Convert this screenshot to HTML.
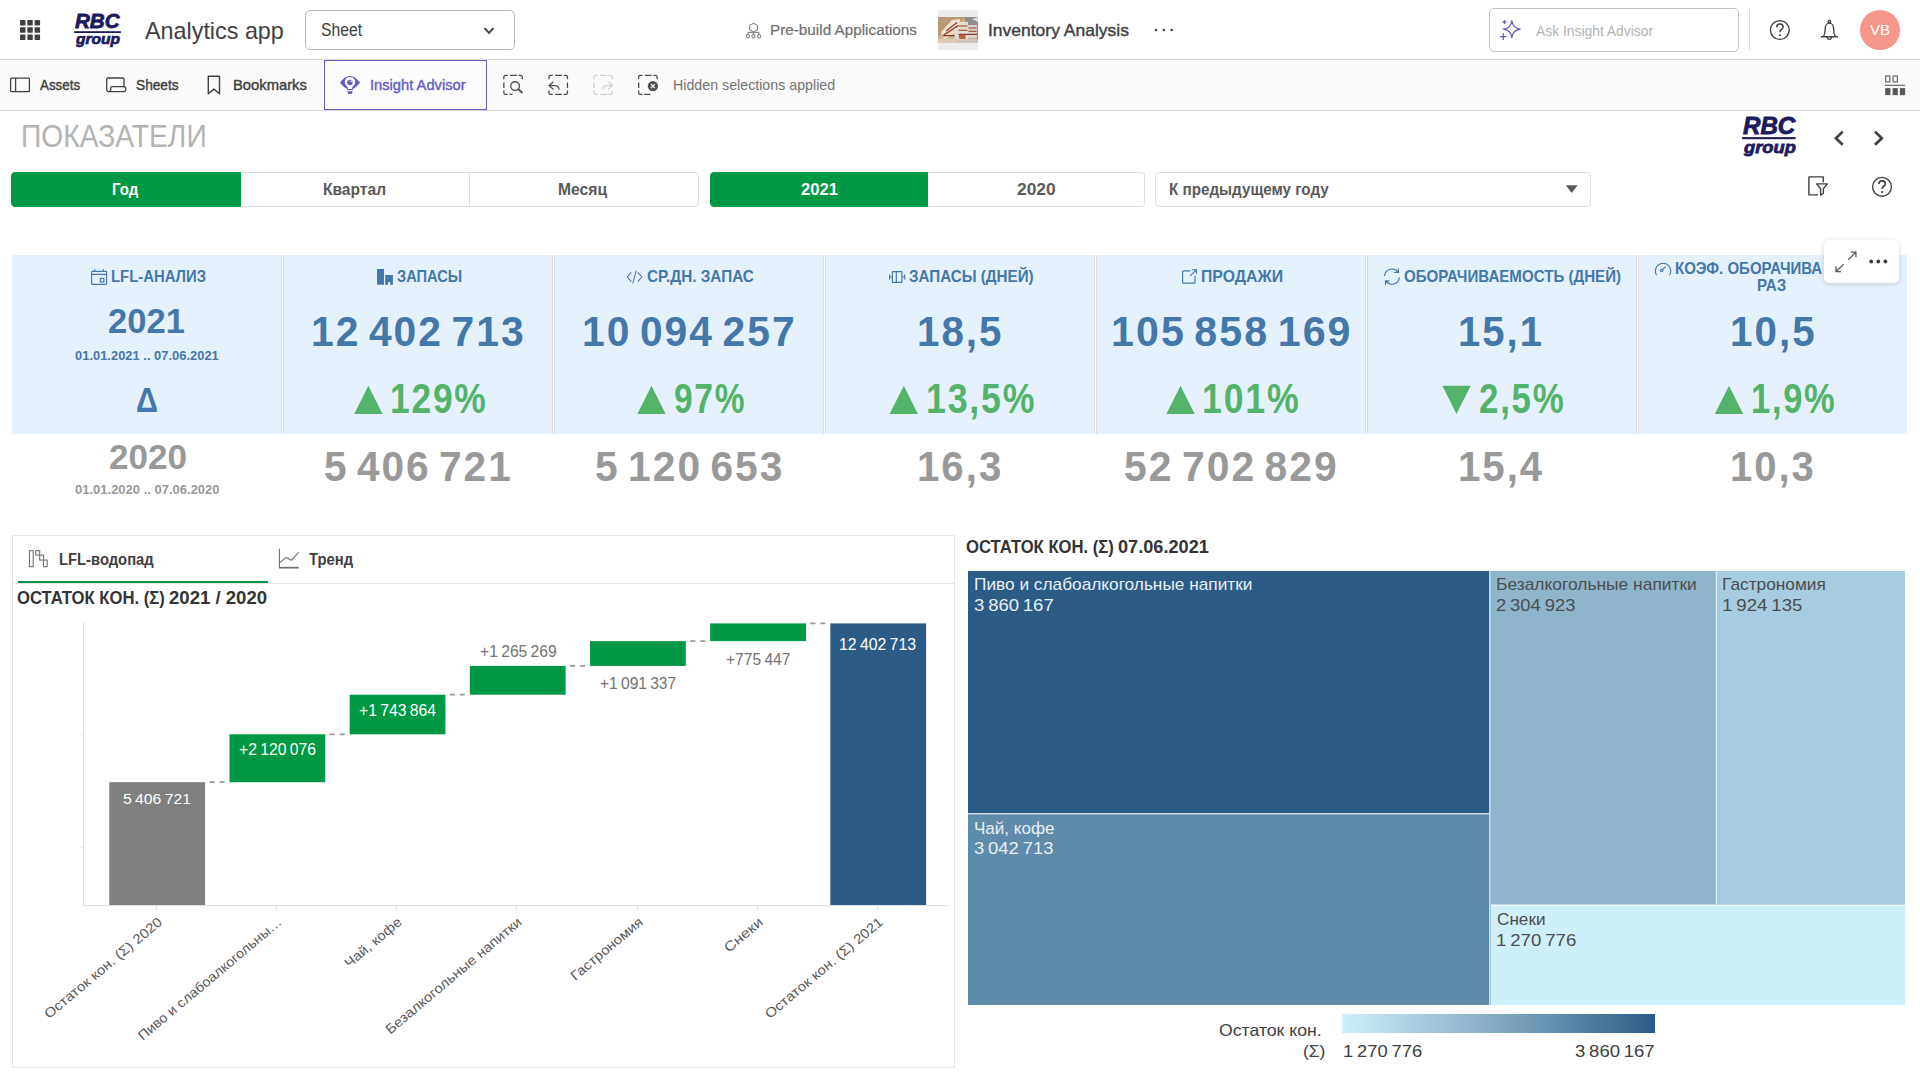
<!DOCTYPE html>
<html lang="ru">
<head>
<meta charset="utf-8">
<title>Inventory Analysis - Analytics app</title>
<style>
*{box-sizing:border-box;margin:0;padding:0}
html,body{width:1920px;height:1080px;overflow:hidden;background:#fff}
body{font-family:"Liberation Sans",sans-serif;color:#404040;position:relative}
.a{position:absolute}
.t{position:absolute;white-space:pre;line-height:1;transform-origin:0 0;display:block}
svg{position:absolute;left:0;top:0;overflow:visible}
svg text{font-family:"Liberation Sans",sans-serif}
#topbar{left:0;top:0;width:1920px;height:60px;background:#fff;border-bottom:1px solid #d9d9d9;box-shadow:inset 0 -1px 0 #f7f7f7}
#toolbar{left:0;top:60px;width:1920px;height:51px;background:#fafafa;border-bottom:1px solid #d6d6d6}
.btn{position:absolute;top:172px;height:35px;background:#fff;border:1px solid #dedede}
.btn.on{background:#009845;border-color:#009845}
.kc{position:absolute;top:255px;height:179px;width:269px;background:#e5f2fd}
.ks{position:absolute;top:255px;height:179px;width:1px;background:#dcdcdc}
.tm{position:absolute}
</style>
</head>
<body>
<!-- ================= TOP BAR ================= -->
<div id="topbar" class="a"></div>
<div id="toolbar" class="a"></div>
<div class="a" id="sheetsel" style="left:305px;top:10px;width:210px;height:40px;border:1px solid #b9b9b9;border-radius:5px;background:#fff"></div>
<div class="a" id="thumbbox" style="left:938px;top:10px;width:40px;height:40px;background:#ececec"></div>
<svg id="thumb" width="40" height="26" viewBox="0 0 40 26" style="left:938px;top:17px">
<rect width="40" height="26" fill="#c9ad8c"/>
<polygon points="0,0 27,0 20,7 0,19" fill="#b79b78"/>
<polygon points="26,0 40,0 40,22 30,18 28,6" fill="#8f8e8d"/>
<polygon points="34,2 40,0 40,5" fill="#d9dde2"/>
<polygon points="3,15 14,3 22,2 22,6 5,20" fill="#efe2d2"/>
<polygon points="5,20 20,10 20,14 6,23" fill="#ead9c6"/>
<rect x="20" y="5" width="10" height="18" fill="#e9ddd0"/>
<rect x="30" y="8" width="9" height="13" fill="#dcd3cb"/>
<g stroke="#8b3a26" stroke-width="1.1"><path d="M5 18.500L20 8.500M8 14L19 5.500M20.500 9h9M20.500 13.200h9M5 18.600h15M20.500 17.400h18.500M30.500 11h8M30.500 14.300h8"/></g>
<rect x="21" y="17.800" width="6.500" height="5.200" fill="#b5633c"/>
<rect x="16.500" y="11" width="3.500" height="12" fill="#d9dbe0"/>
<polygon points="0,21.500 16,21.500 40,22.500 40,26 0,26" fill="#dcc9b6"/>
<polygon points="20,23 40,22.300 40,26 18,26" fill="#c9c4bf"/>
</svg>
<div class="a" id="askbox" style="left:1489px;top:8px;width:250px;height:44px;border:1px solid #c4c4c4;border-radius:5px;background:#fff"></div>
<div class="a" style="left:1749px;top:10px;width:1px;height:40px;background:#d9d9d9"></div>
<div class="a" id="avatar" style="left:1860px;top:10px;width:40px;height:40px;border-radius:50%;background:#f4978a"></div>
<div class="a" id="iabtn" style="left:324px;top:60px;width:163px;height:50px;border:1px solid #655dc6;background:#fcfcfc"></div>

<!-- ================= BUTTON ROW ================= -->
<div class="btn on" style="left:11px;width:230px;border-radius:4px 0 0 4px"></div>
<div class="btn" style="left:241px;width:229px;border-left:none"></div>
<div class="btn" style="left:469px;width:230px;border-radius:0 4px 4px 0"></div>
<div class="btn on" style="left:710px;width:218px;border-radius:4px 0 0 4px"></div>
<div class="btn" style="left:928px;width:217px;border-left:none;border-radius:0 4px 4px 0"></div>
<div class="btn" style="left:1155px;width:436px;border-radius:4px"></div>

<!-- ================= KPI ================= -->
<div class="kc" style="left:12px;width:269px"></div>
<div class="ks" style="left:281px"></div><div class="ks" style="left:283px"></div>
<div class="kc" style="left:284px;width:268px"></div>
<div class="ks" style="left:552px"></div><div class="ks" style="left:554px"></div>
<div class="kc" style="left:555px;width:268px"></div>
<div class="ks" style="left:823px"></div><div class="ks" style="left:825px"></div>
<div class="kc" style="left:826px;width:268px"></div>
<div class="ks" style="left:1094px"></div><div class="ks" style="left:1096px"></div>
<div class="kc" style="left:1097px;width:268px"></div>
<div class="ks" style="left:1365px"></div><div class="ks" style="left:1367px"></div>
<div class="kc" style="left:1368px;width:268px"></div>
<div class="ks" style="left:1636px"></div><div class="ks" style="left:1638px"></div>
<div class="kc" style="left:1639px;width:268px"></div>

<!-- ================= LEFT PANEL ================= -->
<div class="a" id="lpanel" style="left:12px;top:535px;width:943px;height:533px;border:1px solid #e6e6e6"></div>
<div class="a" style="left:13px;top:583px;width:941px;height:1px;background:#e6e6e6"></div>
<div class="a" style="left:18px;top:581px;width:250px;height:2px;background:#009845"></div>

<!-- ================= TREEMAP ================= -->
<div class="tm" style="left:968px;top:571px;width:521px;height:242px;background:#2b5c88"></div>
<div class="tm" style="left:968px;top:813px;width:521px;height:1px;background:#cfdde7"></div>
<div class="tm" style="left:968px;top:814px;width:521px;height:1px;background:#93b1c8"></div>
<div class="tm" style="left:968px;top:815px;width:521px;height:190px;background:#5f8bab"></div>
<div class="tm" style="left:1489px;top:571px;width:1px;height:434px;background:#c6d9e5"></div>
<div class="tm" style="left:1490px;top:571px;width:1px;height:434px;background:#a9c8d9"></div>
<div class="tm" style="left:1491px;top:571px;width:224px;height:333px;background:#8fb5cb"></div>
<div class="tm" style="left:1715px;top:571px;width:1px;height:333px;background:#a5c4d6"></div>
<div class="tm" style="left:1716px;top:571px;width:1px;height:333px;background:#e3edf3"></div>
<div class="tm" style="left:1717px;top:571px;width:188px;height:333px;background:#a8ccdf"></div>
<div class="tm" style="left:1491px;top:904px;width:414px;height:1px;background:#c6dae6"></div>
<div class="tm" style="left:1491px;top:905px;width:414px;height:1px;background:#eef9fc"></div>
<div class="tm" style="left:1491px;top:906px;width:414px;height:99px;background:#cfeff9"></div>
<div class="a" id="legend" style="left:1342px;top:1014px;width:313px;height:19px;background:linear-gradient(90deg,#cfeff9 0%,#a8ccdf 25%,#8fb5cb 42%,#5f8bab 70%,#2b5c88 100%)"></div>

<!-- ================= ICONS / CHART (page coordinates) ================= -->
<svg width="1920" height="1080" viewBox="0 0 1920 1080" fill="none">
<!-- app grid -->
<g fill="#404040">
<rect x="20" y="20" width="5.5" height="5.5" rx=".8"/><rect x="27.3" y="20" width="5.5" height="5.5" rx=".8"/><rect x="34.6" y="20" width="5.5" height="5.5" rx=".8"/>
<rect x="20" y="27.3" width="5.5" height="5.5" rx=".8"/><rect x="27.3" y="27.3" width="5.5" height="5.5" rx=".8"/><rect x="34.6" y="27.3" width="5.5" height="5.5" rx=".8"/>
<rect x="20" y="34.6" width="5.5" height="5.5" rx=".8"/><rect x="27.3" y="34.6" width="5.5" height="5.5" rx=".8"/><rect x="34.6" y="34.6" width="5.5" height="5.5" rx=".8"/>
</g>
<!-- logos -->
<rect x="74.1" y="31.2" width="46.8" height="1.8" fill="#1d1b5e"/>
<rect x="1742.1" y="137.1" width="53.6" height="2.1" fill="#1d1b5e"/>
<!-- sheet chevron -->
<polyline points="484.4,28.2 489,32.8 493.6,28.2" stroke="#404040" stroke-width="1.9"/>
<!-- pre-build icon -->
<g stroke="#858585" stroke-width="1.050" stroke-linejoin="round">
<path d="M753.500 23.200l3.900 2.200v4.300l-3.900 2.200-3.900-2.200v-4.300z"/>
<path d="M753.500 31.900v2.700M747.900 34.600v-1.200a1 1 0 0 1 1-1h9.200a1 1 0 0 1 1 1v1.200"/>
<circle cx="747.900" cy="36.300" r="1.650"/><circle cx="753.500" cy="36.300" r="1.650"/><circle cx="759.100" cy="36.300" r="1.650"/>
</g>
<!-- more dots -->
<g fill="#404040"><circle cx="1156" cy="30" r="1.25"/><circle cx="1163.8" cy="30" r="1.25"/><circle cx="1171.7" cy="30" r="1.25"/></g>
<!-- sparkle -->
<g stroke="#655dc6" stroke-width="1.3" stroke-linejoin="round">
<path d="M1511.85 20.65C1512.75 26.15 1514.85 28.25 1520.35 29.15C1514.85 30.05 1512.75 32.15 1511.85 37.65C1510.95 32.15 1508.85 30.05 1503.35 29.15C1508.85 28.25 1510.95 26.15 1511.85 20.65z"/>
<path d="M1503.300 33.300v6.600M1500 36.600h6.600M1504.500 20.100v3.800M1502.600 22h3.800"/>
</g>
<!-- help / bell -->
<circle cx="1779.8" cy="30" r="9.4" stroke="#404040" stroke-width="1.4"/>
<path d="M1776.700 27.200c0-2 1.400-3.200 3.200-3.200s3.200 1.200 3.200 2.900c0 2.600-3.200 2.500-3.200 5.300" stroke="#404040" stroke-width="1.5"/><circle cx="1779.900" cy="35.300" r="1.050" fill="#404040"/>
<g stroke="#404040" stroke-width="1.350" stroke-linecap="round" stroke-linejoin="round">
<circle cx="1829.400" cy="21.700" r="1.250"/>
<path d="M1821.400 36.700h16M1823.500 36.700c1.200-2.200 1.700-4.300 1.700-8.200a4.200 5.400 0 0 1 8.400 0c0 3.900.5 6 1.700 8.200M1827.300 37.800a2.200 2.200 0 0 0 4.200 0"/>
</g>
<!-- toolbar: assets / sheets / bookmarks -->
<g stroke="#404040" stroke-width="1.3" stroke-linejoin="round">
<rect x="10.600" y="78.100" width="18.800" height="13.600" rx="1"/><path d="M15.600 78.100v13.600"/>
<path d="M124 86.700V79.300a1.300 1.300 0 0 0-1.300-1.300H108a1.300 1.300 0 0 0-1.300 1.300v10a2.400 2.400 0 0 0 2.400 2.400h14.300a2.500 2.500 0 0 0 0-5h-11.400a1.200 1.200 0 0 0-1.200 1.200v1.400a2.400 2.400 0 0 1-2.400 2.400"/>
<path d="M208.300 76.200h11.200v17.600l-5.600-4.700-5.600 4.700z" stroke-width="1.4"/>
</g>
<!-- insight advisor icon -->
<path d="M339.900 82.500c3.500-4.600 6.600-6.600 10.100-6.600s6.600 2 10.100 6.600c-3 3.800-5 5.300-7 6.300l-.2 1.200h-5.800l-.2-1.200c-2-1-4-2.500-7-6.300z" fill="#655dc6"/>
<path d="M350 76.900a5.150 5.150 0 0 1 3.200 9.200c-.8.700-1 1.300-1 2.800h-4.400c0-1.500-.2-2.100-1-2.800a5.150 5.150 0 0 1 3.200-9.200z" fill="#fcfcfc"/>
<circle cx="349.900" cy="82.500" r="2.700" fill="#655dc6"/><circle cx="351.100" cy="81.200" r=".8" fill="#fcfcfc"/>
<path d="M347.400 91.200h5.200a2.600 2.900 0 0 1-5.200 0z" fill="#655dc6"/>
<!-- selection tools -->
<g stroke="#4d4d4d" stroke-width="1.3">
<path d="M503.85 79.25V77.05a1.6 1.6 0 0 1 1.6-1.6h2.2M510.05 75.45h6.8M518.55 75.45h2.2a1.6 1.6 0 0 1 1.6 1.6v2.2M507.65 94.35h-2.2a1.6 1.6 0 0 1-1.6-1.6v-2.2M503.85 82.45v5.6M509.4 94.350h3.200"/>
<circle cx="515.100" cy="86.100" r="4.350"/><path d="M518.300 89.300l4.100 3.700" stroke-width="1.900"/>
<path d="M548.95 79.25V77.05a1.6 1.6 0 0 1 1.6-1.6h2.2M555.15 75.45h6.8M563.65 75.45h2.2a1.6 1.6 0 0 1 1.6 1.6v2.2M567.45 82.45v5.6M567.45 90.55v2.2a1.6 1.6 0 0 1-1.6 1.6h-2.2M555.15 94.35h6.8M552.75 94.35h-2.2a1.6 1.6 0 0 1-1.6-1.6v-2.2"/>
<path d="M553.400 81.700l-4.300 3.900 4.300 3.900M549.500 85.600h5.300c2.700 0 4.200 1.400 4.200 4.200" stroke-width="1.250"/>
</g>
<g stroke="#d0d0d0" stroke-width="1.300">
<path d="M593.85 79.25V77.05a1.6 1.6 0 0 1 1.6-1.6h2.2M600.05 75.45h6.8M608.55 75.45h2.2a1.6 1.6 0 0 1 1.6 1.6v2.2M612.35 90.55v2.2a1.6 1.6 0 0 1-1.6 1.6h-2.2M600.05 94.35h6.8M597.65 94.35h-2.2a1.6 1.6 0 0 1-1.6-1.6v-2.2M593.85 82.45v5.6"/>
<path d="M608.200 81.700l4.300 3.900-4.300 3.900M612.100 85.600h-5.300c-2.700 0-4.200 1.400-4.200 4.200" stroke-width="1.250"/>
</g>
<g stroke="#4d4d4d" stroke-width="1.300">
<path d="M638.65 79.25V77.05a1.6 1.6 0 0 1 1.6-1.6h2.2M644.85 75.45h6.8M653.35 75.45h2.2a1.6 1.6 0 0 1 1.6 1.6v2.2M642.45 94.35h-2.2a1.6 1.6 0 0 1-1.6-1.6v-2.2M638.65 82.45v5.6M644.200 94.350h6.200"/>
</g>
<circle cx="652.900" cy="86.100" r="5.200" fill="#505050"/><path d="M650.900 84.100l4 4M654.900 84.100l-4 4" stroke="#fafafa" stroke-width="1.250"/>
<!-- right toolbar icon -->
<g stroke="#545454" stroke-width="1.050"><rect x="1885.700" y="76" width="4.200" height="5.900"/><rect x="1893.100" y="76" width="4.200" height="5.900"/><path d="M1885 85.300h20.200"/></g>
<g fill="#595959"><rect x="1885.200" y="88.100" width="5.200" height="7"/><rect x="1892.600" y="88.100" width="5.200" height="7"/><rect x="1899.900" y="88.100" width="5.200" height="7"/></g>
<!-- title row icons -->
<g stroke="#404040" stroke-width="2.700"><polyline points="1842.700,131.600 1835.900,138.200 1842.700,144.800"/><polyline points="1875,131.600 1881.800,138.200 1875,144.800"/></g>
<polygon points="1565.800,185.200 1577.600,185.200 1571.700,193.100" fill="#595959"/>
<g stroke="#404040" stroke-width="1.400" stroke-linejoin="round">
<path d="M1818 194.900h-9.100v-18h14.300v5.400"/>
<path d="M1816.600 183.900h10.700l-3.900 4.900v4.700l-2.800 1.700v-6.400z"/>
<circle cx="1882" cy="186.800" r="9.400"/>
</g>
<path d="M1878.900 184c0-2 1.400-3.200 3.200-3.200s3.200 1.200 3.200 2.900c0 2.600-3.200 2.500-3.200 5.300" stroke="#404040" stroke-width="1.700"/><circle cx="1882.100" cy="192.100" r="1.050" fill="#404040"/>

<!-- KPI header icons -->
<g stroke="#4477aa" stroke-width="1.150">
<rect x="91.600" y="271.300" width="15" height="13" rx=".8"/><path d="M91.600 274.300h15M94.800 269.300v2.400M103.400 269.300v2.400"/><rect x="100.300" y="278.400" width="3.600" height="3.600"/>
</g>
<path d="M377 269.100h7v15.600h-7zM385.200 275.100h7.700v9.600h-2.700v-2.600h-2.200v2.600h-2.800z" fill="#4477aa"/>
<g stroke="#4477aa" stroke-width="1.050"><path d="M631.300 272.400l-4 4.600 4 4.600M637.800 272.400l4 4.600-4 4.600M636.200 270.700l-3.400 12.600"/></g>
<g stroke="#4477aa" stroke-width="1.150"><rect x="892.400" y="271.600" width="9.500" height="10.800" rx=".6"/><path d="M896.300 271.600v10.800M889.500 277h2.900M901.900 277h2.900M889.600 274.400v5.200M904.700 274.400v5.200"/></g>
<g stroke="#4477aa" stroke-width="1.150"><path d="M1190 270.800h-6.400a1 1 0 0 0-1 1v10.400a1 1 0 0 0 1 1h10.400a1 1 0 0 0 1-1v-6.200M1190.200 275.900l6-6M1192.200 269.700h4.200v4.200"/></g>
<g stroke="#4477aa" stroke-width="1.150" stroke-linecap="round"><path d="M1384.600 275.500a7.400 7.400 0 0 1 13.300-3.400M1399.300 277.800a7.400 7.400 0 0 1-13.300 3.400M1398.400 268.700v3.700h-3.700M1385.500 284.500v-3.700h3.700"/></g>
<g stroke="#4477aa" stroke-width="1.100"><path d="M1656.600 275.200a7.700 7.700 0 1 1 12.900 0M1662.200 269.900l3.600-3.200"/><circle cx="1661.700" cy="270.600" r="1.200"/></g>
<!-- KPI triangles -->
<g fill="#54b36a">
<polygon points="354.200,413.900 382.600,413.900 368.400,385.800"/>
<polygon points="637.400,413.900 665.600,413.900 651.500,385.800"/>
<polygon points="889.600,413.900 917.900,413.900 903.800,385.800"/>
<polygon points="1166.400,413.900 1194.700,413.900 1180.500,385.800"/>
<polygon points="1442.400,385.800 1470.700,385.800 1456.500,413.900"/>
<polygon points="1714.800,413.900 1743.100,413.900 1729,385.800"/>
</g>

<!-- tab icons -->
<g stroke="#737373" stroke-width="1.100"><rect x="29.500" y="550.700" width="3.700" height="16"/><rect x="35.800" y="550.700" width="3.900" height="4.400"/><rect x="39.700" y="555.100" width="3.900" height="5"/><rect x="43.500" y="560.100" width="3.700" height="6.600"/></g>
<g stroke="#737373"><path d="M279.400 548.700v19.400" stroke-width="1.100"/><path d="M279 567.700h19.800" stroke-width="1.700"/><path d="M279.600 562.600l6.800-5.200 5 2.800 7.200-7.800" stroke-width="1.100"/></g>

<!-- ============ WATERFALL CHART ============ -->
<g shape-rendering="crispEdges">
<path d="M83.500 622v283M83 905.500h866" stroke="#e0e0e0" stroke-width="1"/>
<path d="M156.500 906v5M276.500 906v5M396.500 906v5M516.500 906v5M637.500 906v5M757.500 906v5M877.500 906v5" stroke="#e3e3e3" stroke-width="1"/>
<path d="M79 734.500h4M79 847.500h4" stroke="#eeeeee" stroke-width="1"/>
</g>
<g>
<rect x="109.30" y="782.2" width="95.8" height="122.8" fill="#808080"/>
<rect x="229.47" y="734.3" width="95.8" height="47.9" fill="#009845"/>
<rect x="349.64" y="694.7" width="95.8" height="39.6" fill="#009845"/>
<rect x="469.81" y="665.9" width="95.8" height="28.8" fill="#009845"/>
<rect x="589.98" y="641.1" width="95.8" height="24.8" fill="#009845"/>
<rect x="710.15" y="623.4" width="95.8" height="17.7" fill="#009845"/>
<rect x="830.32" y="623.4" width="95.8" height="281.6" fill="#2b5c88"/>
</g>
<g stroke="#9a9a9a" stroke-width="1.8" stroke-dasharray="5 5">
<path d="M209.700 782.200h15"/><path d="M329.800 734.300h15"/><path d="M449.900 694.700h15"/><path d="M570.100 665.900h15"/><path d="M690.300 641.100h15"/><path d="M810.400 623.400h15"/>
</g>
<g fill="#595959" font-size="13.5">
<text transform="translate(163.2,923.5) rotate(-40)" text-anchor="end" textLength="149.1" lengthAdjust="spacingAndGlyphs">Остаток кон. (Σ) 2020</text>
<text transform="translate(282.7,923.5) rotate(-40)" text-anchor="end" textLength="182.8" lengthAdjust="spacingAndGlyphs">Пиво и слабоалкогольны…</text>
<text transform="translate(402.7,923.5) rotate(-40)" text-anchor="end" textLength="69.9" lengthAdjust="spacingAndGlyphs">Чай, кофе</text>
<text transform="translate(522.7,923.5) rotate(-40)" text-anchor="end" textLength="173" lengthAdjust="spacingAndGlyphs">Безалкогольные напитки</text>
<text transform="translate(643.9,923.5) rotate(-40)" text-anchor="end" textLength="89.7" lengthAdjust="spacingAndGlyphs">Гастрономия</text>
<text transform="translate(763.9,923.5) rotate(-40)" text-anchor="end" textLength="46" lengthAdjust="spacingAndGlyphs">Снеки</text>
<text transform="translate(883.9,923.5) rotate(-40)" text-anchor="end" textLength="149.1" lengthAdjust="spacingAndGlyphs">Остаток кон. (Σ) 2021</text>
</g>
</svg>

<!-- ================= TEXT ================= -->
<span class="t" style="left:145.20px;top:20.00px;font-size:23.4px;color:#404040;transform:scaleX(0.9978)">Analytics app</span>
<span class="t" style="left:320.80px;top:21.00px;font-size:18.6px;color:#404040;transform:scaleX(0.8437)">Sheet</span>
<span class="t" style="left:769.97px;top:23.00px;font-size:14.83px;color:#6e6e6e;transform:scaleX(1.0303);-webkit-text-stroke:0.2px #6e6e6e">Pre-build Applications</span>
<span class="t" style="left:987.67px;top:22.00px;font-size:17.01px;color:#404040;transform:scaleX(1.0282);-webkit-text-stroke:0.4px #404040">Inventory Analysis</span>
<span class="t" style="left:1536.20px;top:23.00px;font-size:15.12px;color:#b3b3b3;transform:scaleX(0.9171)">Ask Insight Advisor</span>
<span class="t" style="left:1870.10px;top:22.00px;font-size:15.41px;color:#ffffff;transform:scaleX(0.9716)">VB</span>
<span class="t" style="left:40.00px;top:77.00px;font-size:15.12px;color:#404040;transform:scaleX(0.8845);-webkit-text-stroke:0.4px #404040">Assets</span>
<span class="t" style="left:136.20px;top:77.00px;font-size:15.12px;color:#404040;transform:scaleX(0.9055);-webkit-text-stroke:0.4px #404040">Sheets</span>
<span class="t" style="left:233.22px;top:77.00px;font-size:15.12px;color:#404040;transform:scaleX(0.9771);-webkit-text-stroke:0.4px #404040">Bookmarks</span>
<span class="t" style="left:369.63px;top:77.00px;font-size:15.12px;color:#655dc6;transform:scaleX(0.9728);-webkit-text-stroke:0.4px #655dc6">Insight Advisor</span>
<span class="t" style="left:672.86px;top:77.00px;font-size:15.12px;color:#737373;transform:scaleX(0.9415)">Hidden selections applied</span>
<span class="t" style="left:21.38px;top:122.00px;font-size:30.96px;color:#b3b3b3;transform:scaleX(0.9115)">ПОКАЗАТЕЛИ</span>
<span class="t" style="left:112.33px;top:181.00px;font-size:17.38px;color:#fff;transform:scaleX(0.8688);font-weight:bold">Год</span>
<span class="t" style="left:322.90px;top:181.00px;font-size:17.38px;color:#595959;transform:scaleX(0.8971);font-weight:bold">Квартал</span>
<span class="t" style="left:558.10px;top:181.00px;font-size:17.38px;color:#595959;transform:scaleX(0.9037);font-weight:bold">Месяц</span>
<span class="t" style="left:800.50px;top:181.00px;font-size:17.38px;color:#fff;transform:scaleX(0.9624);font-weight:bold">2021</span>
<span class="t" style="left:1017.00px;top:181.00px;font-size:17.38px;color:#595959;transform:scaleX(1.0010);font-weight:bold">2020</span>
<span class="t" style="left:1168.79px;top:182.00px;font-size:16.72px;color:#595959;transform:scaleX(0.9107);font-weight:bold">К предыдущему году</span>
<span class="t" style="left:110.72px;top:269.00px;font-size:16.86px;color:#4477aa;transform:scaleX(0.8815);font-weight:bold">LFL-АНАЛИЗ</span>
<span class="t" style="left:397.30px;top:269.00px;font-size:16.86px;color:#4477aa;transform:scaleX(0.8677);font-weight:bold">ЗАПАСЫ</span>
<span class="t" style="left:647.40px;top:269.00px;font-size:16.86px;color:#4477aa;transform:scaleX(0.9079);font-weight:bold">СР.ДН. ЗАПАС</span>
<span class="t" style="left:909.30px;top:269.00px;font-size:16.86px;color:#4477aa;transform:scaleX(0.8998);font-weight:bold">ЗАПАСЫ (ДНЕЙ)</span>
<span class="t" style="left:1201.26px;top:269.00px;font-size:16.86px;color:#4477aa;transform:scaleX(0.9362);font-weight:bold">ПРОДАЖИ</span>
<span class="t" style="left:1404.40px;top:269.00px;font-size:16.86px;color:#4477aa;transform:scaleX(0.8950);font-weight:bold">ОБОРАЧИВАЕМОСТЬ (ДНЕЙ)</span>
<span class="t" style="left:1674.87px;top:260.00px;font-size:16.13px;color:#4477aa;transform:scaleX(0.9313);font-weight:bold">КОЭФ. ОБОРАЧИВА</span>
<span class="t" style="left:1823.70px;top:260.00px;font-size:16.13px;color:#4477aa;transform:scaleX(0.8971);font-weight:bold">ЕМОСТИ,</span>
<span class="t" style="left:1757.47px;top:277.00px;font-size:16.28px;color:#4477aa;transform:scaleX(0.9349);font-weight:bold">РАЗ</span>
<span class="t" style="left:107.90px;top:304.00px;font-size:34.59px;color:#4477aa;transform:scaleX(1.0001);font-weight:bold">2021</span>
<span class="t" style="left:74.70px;top:350.00px;font-size:12.35px;color:#4477aa;transform:scaleX(1.0472);font-weight:bold">01.01.2021 .. 07.06.2021</span>
<span class="t" style="left:135.65px;top:383.00px;font-size:35.88px;color:#4477aa;transform:scaleX(0.8500);font-weight:bold">Δ</span>
<span class="t" style="left:108.97px;top:440.00px;font-size:34.22px;color:#999999;transform:scaleX(1.0257);font-weight:bold">2020</span>
<span class="t" style="left:75.00px;top:484.00px;font-size:12.5px;color:#999999;transform:scaleX(1.0398);font-weight:bold">01.01.2020 .. 07.06.2020</span>
<span class="t" style="left:311.42px;top:310.00px;font-size:43.38px;color:#4477aa;transform:scaleX(0.9408);font-weight:bold;word-spacing:-5.29px;letter-spacing:2.17px">12 402 713</span>
<span class="t" style="left:581.92px;top:310.00px;font-size:43.38px;color:#4477aa;transform:scaleX(0.9408);font-weight:bold;word-spacing:-5.29px;letter-spacing:2.17px">10 094 257</span>
<span class="t" style="left:917.14px;top:310.00px;font-size:43.38px;color:#4477aa;transform:scaleX(0.9293);font-weight:bold;letter-spacing:2.17px">18,5</span>
<span class="t" style="left:1110.60px;top:310.00px;font-size:43.38px;color:#4477aa;transform:scaleX(0.9491);font-weight:bold;word-spacing:-5.29px;letter-spacing:2.17px">105 858 169</span>
<span class="t" style="left:1458.15px;top:310.00px;font-size:43.38px;color:#4477aa;transform:scaleX(0.9225);font-weight:bold;letter-spacing:2.17px">15,1</span>
<span class="t" style="left:1730.34px;top:310.00px;font-size:43.38px;color:#4477aa;transform:scaleX(0.9305);font-weight:bold;letter-spacing:2.17px">10,5</span>
<span class="t" style="left:390.17px;top:377.00px;font-size:43.38px;color:#54b36a;transform:scaleX(0.8157);font-weight:bold;letter-spacing:2.17px">129%</span>
<span class="t" style="left:674.13px;top:377.00px;font-size:43.38px;color:#54b36a;transform:scaleX(0.7736);font-weight:bold;letter-spacing:2.17px">97%</span>
<span class="t" style="left:925.55px;top:377.00px;font-size:43.38px;color:#54b36a;transform:scaleX(0.8234);font-weight:bold;letter-spacing:2.17px">13,5%</span>
<span class="t" style="left:1202.35px;top:377.00px;font-size:43.38px;color:#54b36a;transform:scaleX(0.8226);font-weight:bold;letter-spacing:2.17px">101%</span>
<span class="t" style="left:1479.20px;top:377.00px;font-size:43.38px;color:#54b36a;transform:scaleX(0.8044);font-weight:bold;letter-spacing:2.17px">2,5%</span>
<span class="t" style="left:1750.81px;top:377.00px;font-size:43.38px;color:#54b36a;transform:scaleX(0.7947);font-weight:bold;letter-spacing:2.17px">1,9%</span>
<span class="t" style="left:324.05px;top:445.00px;font-size:42.88px;color:#999999;transform:scaleX(0.9459);font-weight:bold;word-spacing:-5.23px;letter-spacing:2.14px">5 406 721</span>
<span class="t" style="left:594.85px;top:445.00px;font-size:42.88px;color:#999999;transform:scaleX(0.9495);font-weight:bold;word-spacing:-5.23px;letter-spacing:2.14px">5 120 653</span>
<span class="t" style="left:917.12px;top:445.00px;font-size:42.88px;color:#999999;transform:scaleX(0.9376);font-weight:bold;letter-spacing:2.14px">16,3</span>
<span class="t" style="left:1124.05px;top:445.00px;font-size:42.88px;color:#999999;transform:scaleX(0.9523);font-weight:bold;word-spacing:-5.23px;letter-spacing:2.14px">52 702 829</span>
<span class="t" style="left:1458.13px;top:445.00px;font-size:42.88px;color:#999999;transform:scaleX(0.9371);font-weight:bold;letter-spacing:2.14px">15,4</span>
<span class="t" style="left:1729.53px;top:445.00px;font-size:42.88px;color:#999999;transform:scaleX(0.9330);font-weight:bold;letter-spacing:2.14px">10,3</span>
<span class="t" style="left:58.60px;top:551.00px;font-size:16.42px;color:#404040;transform:scaleX(0.9009);font-weight:bold">LFL-водопад</span>
<span class="t" style="left:309.20px;top:551.00px;font-size:16.42px;color:#404040;transform:scaleX(0.9019);font-weight:bold">Тренд</span>
<span class="t" style="left:16.50px;top:589.00px;font-size:18.9px;color:#333333;transform:scaleX(0.8809);font-weight:bold">ОСТАТОК КОН. (Σ)</span>
<span class="t" style="left:168.80px;top:589.00px;font-size:18.9px;color:#333333;transform:scaleX(0.9830);font-weight:bold">2021 / 2020</span>
<span class="t" style="left:123.00px;top:791.00px;font-size:15.48px;color:#ffffff;transform:scaleX(1.0205);word-spacing:-1.08px">5 406 721</span>
<span class="t" style="left:239.30px;top:742.00px;font-size:15.99px;color:#ffffff;transform:scaleX(0.9832);word-spacing:-1.12px">+2 120 076</span>
<span class="t" style="left:359.30px;top:703.00px;font-size:15.99px;color:#ffffff;transform:scaleX(0.9832);word-spacing:-1.12px">+1 743 864</span>
<span class="t" style="left:479.50px;top:644.00px;font-size:15.99px;color:#737373;transform:scaleX(0.9819);word-spacing:-1.12px">+1 265 269</span>
<span class="t" style="left:599.80px;top:676.00px;font-size:15.99px;color:#737373;transform:scaleX(0.9743);word-spacing:-1.12px">+1 091 337</span>
<span class="t" style="left:725.60px;top:652.00px;font-size:15.99px;color:#737373;transform:scaleX(0.9772);word-spacing:-1.12px">+775 447</span>
<span class="t" style="left:839.21px;top:637.00px;font-size:15.99px;color:#ffffff;transform:scaleX(0.9900);word-spacing:-1.12px">12 402 713</span>
<span class="t" style="left:966.30px;top:538.00px;font-size:18.75px;color:#333333;transform:scaleX(0.8884);font-weight:bold">ОСТАТОК КОН. (Σ)</span>
<span class="t" style="left:1118.10px;top:538.00px;font-size:18.75px;color:#333333;transform:scaleX(0.9677);font-weight:bold">07.06.2021</span>
<span class="t" style="left:974.08px;top:576.00px;font-size:17.01px;color:#e8eff5;transform:scaleX(1.0154)">Пиво и слабоалкогольные напитки</span>
<span class="t" style="left:974.20px;top:597.00px;font-size:17.15px;color:#e8eff5;transform:scaleX(1.0788);word-spacing:-1.20px">3 860 167</span>
<span class="t" style="left:974.02px;top:820.00px;font-size:17.38px;color:#e8eff5;transform:scaleX(0.9814)">Чай, кофе</span>
<span class="t" style="left:974.20px;top:840.00px;font-size:17.38px;color:#e8eff5;transform:scaleX(1.0629);word-spacing:-1.22px">3 042 713</span>
<span class="t" style="left:1495.98px;top:576.00px;font-size:17.01px;color:#4d4d4d;transform:scaleX(1.0235)">Безалкогольные напитки</span>
<span class="t" style="left:1496.20px;top:597.00px;font-size:17.15px;color:#4d4d4d;transform:scaleX(1.0747);word-spacing:-1.20px">2 304 923</span>
<span class="t" style="left:1722.18px;top:576.00px;font-size:17.01px;color:#4d4d4d;transform:scaleX(1.0166)">Гастрономия</span>
<span class="t" style="left:1721.91px;top:597.00px;font-size:17.15px;color:#4d4d4d;transform:scaleX(1.0896);word-spacing:-1.20px">1 924 135</span>
<span class="t" style="left:1497.00px;top:911.00px;font-size:17.01px;color:#4d4d4d;transform:scaleX(1.0093)">Снеки</span>
<span class="t" style="left:1495.92px;top:932.00px;font-size:17.3px;color:#4d4d4d;transform:scaleX(1.0776);word-spacing:-1.21px">1 270 776</span>
<span class="t" style="left:1219.40px;top:1023.00px;font-size:16.72px;color:#404040;transform:scaleX(1.0577)">Остаток кон.</span>
<span class="t" style="left:1302.50px;top:1043.00px;font-size:17.38px;color:#404040;transform:scaleX(1.0043)">(Σ)</span>
<span class="t" style="left:1343.20px;top:1044.00px;font-size:16.72px;color:#404040;transform:scaleX(1.1008);word-spacing:-1.17px">1 270 776</span>
<span class="t" style="left:1575.00px;top:1044.00px;font-size:16.72px;color:#404040;transform:scaleX(1.1063);word-spacing:-1.17px">3 860 167</span>
<span class="t" style="left:75.30px;top:11.00px;font-size:20.49px;color:#1d1b5e;transform:scaleX(1.0047);font-weight:bold;font-style:italic;-webkit-text-stroke:0.8px #1d1b5e">RBC</span>
<span class="t" style="left:75.89px;top:32.00px;font-size:14.2px;color:#1d1b5e;transform:scaleX(1.0934);font-weight:bold;font-style:italic;-webkit-text-stroke:0.7px #1d1b5e">group</span>
<span class="t" style="left:1743.20px;top:114.00px;font-size:24.13px;color:#1d1b5e;transform:scaleX(0.9992);font-weight:bold;font-style:italic;-webkit-text-stroke:0.9px #1d1b5e">RBC</span>
<span class="t" style="left:1743.60px;top:139.50px;font-size:16.6px;color:#1d1b5e;transform:scaleX(1.1031);font-weight:bold;font-style:italic;-webkit-text-stroke:0.8px #1d1b5e">group</span>

<!-- floating object toolbar -->
<div class="a" id="ftool" style="left:1824px;top:240px;width:75px;height:43px;background:#fff;border-radius:5px;box-shadow:0 1px 5px rgba(0,0,0,.18)"></div>
<svg width="1920" height="1080" viewBox="0 0 1920 1080" fill="none" style="pointer-events:none">
<g stroke="#595959" stroke-width="1.300"><path d="M1848.200 259.700l7.600-7.400M1850.800 252.200h5.100v5.100M1843.700 264.100l-7.600 7.400M1841.100 271.600H1836v-5.100"/></g>
<g fill="#404040"><circle cx="1871.200" cy="261.500" r="1.900"/><circle cx="1878.300" cy="261.500" r="1.900"/><circle cx="1885.400" cy="261.500" r="1.900"/></g>
</svg>
</body>
</html>
